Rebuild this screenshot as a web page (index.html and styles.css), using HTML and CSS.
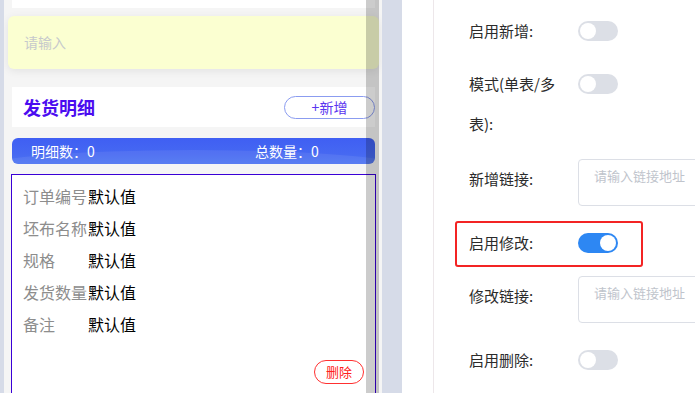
FILE: index.html
```html
<!DOCTYPE html>
<html lang="zh-CN">

<head>
    <meta charset="UTF-8">
    <meta name="viewport" content="width=device-width, initial-scale=1">
    <title>表单设计</title>
    <link rel="stylesheet" href="styles.css">
</head>

<body>
    <div class="app">
        <div class="phone">
            <div class="top-card"></div>
            <div class="input-box">请输入</div>

            <div class="section-head">
                <h2>发货明细</h2>
                <button class="add-btn">+新增</button>
            </div>

            <div class="summary-bar">
                <span class="sum-left">明细数：0</span>
                <span>总数量：0</span>
            </div>

            <div class="detail-box">
                <div class="row"><span class="label">订单编号</span><span class="value">默认值</span></div>
                <div class="row"><span class="label">坯布名称</span><span class="value">默认值</span></div>
                <div class="row"><span class="label">规格</span><span class="value">默认值</span></div>
                <div class="row"><span class="label">发货数量</span><span class="value">默认值</span></div>
                <div class="row"><span class="label">备注</span><span class="value">默认值</span></div>
                <div class="row-actions">
                    <button class="del-btn">删除</button>
                </div>
            </div>

            <div class="scroll-shade"></div>
        </div>

        <div class="props">
            <div class="form">
                <div class="form-item">
                    <label class="form-label">启用新增:</label>
                    <span class="switch"></span>
                </div>
                <div class="form-item wrap">
                    <label class="form-label">模式(单表/多表):</label>
                    <span class="switch"></span>
                </div>
                <div class="form-item">
                    <label class="form-label">新增链接:</label>
                    <textarea class="link-input" placeholder="请输入链接地址"></textarea>
                </div>
                <div class="form-item marked">
                    <label class="form-label">启用修改:</label>
                    <span class="switch on"></span>
                </div>
                <div class="form-item">
                    <label class="form-label">修改链接:</label>
                    <textarea class="link-input" placeholder="请输入链接地址"></textarea>
                </div>
                <div class="form-item">
                    <label class="form-label">启用删除:</label>
                    <span class="switch"></span>
                </div>
            </div>
        </div>
    </div>
</body>

</html>
```

FILE: styles.css
```css
body,
h2 {
    margin: 0;
    padding: 0;
}

body {
    font-family: 'Noto Sans CJK SC', 'Liberation Sans', sans-serif;
    background: #d6dbe8;
    width: 695px;
    height: 393px;
    overflow: hidden;
}

.app {
    display: flex;
    height: 393px;
}

/* left: mobile preview */
.phone {
    position: relative;
    flex-shrink: 0;
    width: 378px;
    margin-left: 4px;
    padding: 0 7px 0 8px;
    box-sizing: border-box;
    background: #f5f5f5;
    overflow: hidden;
}

.top-card {
    height: 8px;
    background: #fff;
}

.input-box {
    margin: 8px -4px 0;
    height: 53px;
    line-height: 53px;
    padding-left: 16px;
    background: #fbffd1;
    border-radius: 6px;
    box-shadow: 0 2px 8px rgba(0, 0, 0, 0.08);
    color: #c6c9cc;
    font-size: 14px;
}

.section-head {
    margin-top: 18px;
    height: 40px;
    padding-left: 11px;
    background: #fff;
    display: flex;
    align-items: center;
    justify-content: space-between;
}

.section-head h2 {
    font-size: 18px;
    font-weight: bold;
    color: #4b0cf0;
}

.add-btn {
    width: 91px;
    height: 23px;
    padding: 0;
    border: 1px solid #8b9cf0;
    border-radius: 12px;
    background: #fff;
    color: #5b35f0;
    font-family: inherit;
    font-size: 14px;
    line-height: 21px;
}

.summary-bar {
    position: relative;
    margin-top: 11px;
    height: 26px;
    padding-left: 19px;
    display: flex;
    align-items: center;
    border-radius: 6px;
    background: linear-gradient(180deg, #3f5ff3 0%, #4668f2 60%, #4d74f1 100%);
    color: #fff;
    font-size: 14px;
    white-space: nowrap;
    overflow: hidden;
}

.summary-bar::after {
    content: "";
    position: absolute;
    left: -40px;
    right: -40px;
    top: 12px;
    height: 40px;
    border-radius: 50%;
    background: rgba(255, 255, 255, 0.07);
}

.sum-left {
    width: 224px;
}

.detail-box {
    margin: 10px -1px 0;
    padding: 5px 11px 0;
    height: 240px;
    border: 1px solid #3a00d6;
    background: #fff;
}

.row {
    display: flex;
    height: 32px;
    line-height: 32px;
    font-size: 16px;
}

.row .label {
    width: 65px;
    color: #8d8d8d;
}

.row .value {
    color: #000;
}

.row-actions {
    margin-top: 20px;
    display: flex;
    justify-content: flex-end;
}

.del-btn {
    width: 50px;
    height: 24px;
    padding: 0;
    border: 1px solid #ff3030;
    border-radius: 12px;
    background: #fff;
    color: #ff2020;
    font-family: inherit;
    font-size: 13px;
    line-height: 22px;
}

.scroll-shade {
    position: absolute;
    top: 0;
    bottom: 0;
    left: 362px;
    width: 13px;
    background: rgba(0, 0, 0, 0.2);
}

/* right: property panel */
.props {
    flex: 1;
    min-width: 0;
    margin-left: 20px;
    padding-left: 31px;
    background: #fff;
    overflow: hidden;
}

.form {
    height: 100%;
    border-left: 1px solid #ede7ea;
    padding: 11px 0 0 35px;
}

.form-item {
    position: relative;
    display: flex;
    align-items: flex-start;
    margin-bottom: 17px;
}

.form-item:first-child {
    margin-bottom: 13px;
}

.form-item.wrap {
    margin-bottom: 16px;
}

.form-item.wrap .form-label {
    line-height: 39.5px;
}

.form-label {
    width: 98px;
    padding-right: 11px;
    line-height: 40px;
    font-size: 15px;
    color: #2b2b2b;
    flex-shrink: 0;
}

.switch {
    position: relative;
    margin-top: 10px;
    width: 40px;
    height: 20px;
    border-radius: 10px;
    background: #dcdfe6;
    flex-shrink: 0;
}

.switch::after {
    content: "";
    position: absolute;
    top: 2px;
    left: 2px;
    width: 16px;
    height: 16px;
    border-radius: 50%;
    background: #fff;
}

.switch.on {
    background: #2d87f3;
}

.switch.on::after {
    left: 22px;
}

.link-input {
    width: 220px;
    height: 47px;
    padding: 6px 15px;
    box-sizing: border-box;
    border: 1px solid #dcdfe6;
    border-radius: 4px;
    resize: none;
    font-family: inherit;
    font-size: 13px;
    flex-shrink: 0;
}

.link-input::placeholder {
    color: #c0c4cc;
}

.marked {
    margin-top: 1px;
}

.form-item.marked {
    margin-bottom: 13px;
}

.marked::after {
    content: "";
    position: absolute;
    left: -14px;
    top: -2px;
    width: 188px;
    height: 46px;
    box-sizing: border-box;
    border: 2px solid #f32424;
    border-radius: 3px;
}
```
